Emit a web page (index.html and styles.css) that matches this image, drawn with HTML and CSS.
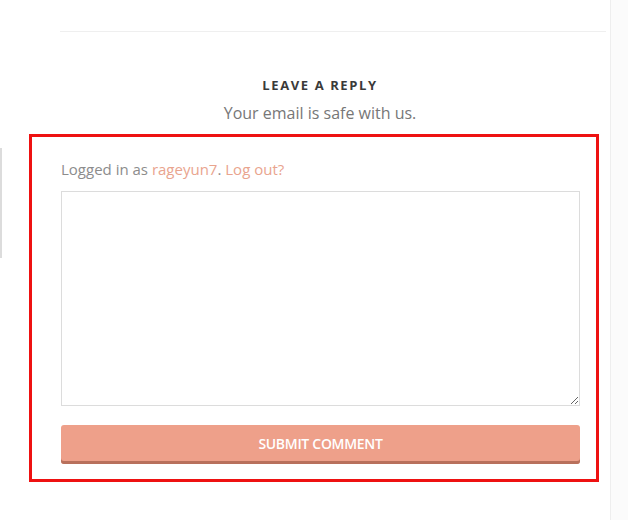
FILE: index.html
```html
<!DOCTYPE html>
<html>
<head>
<meta charset="utf-8">
<link rel="stylesheet" href="styles.css">
</head>
<body>
<div class="page">
  <div class="main">
    <div class="side-mark"></div>
    <div class="divider"></div>
    <div class="respond">
      <h3 class="reply-title">LEAVE A REPLY</h3>
      <p class="reply-note">Your email is safe with us.</p>
      <div class="highlight">
        <form class="comment-form">
          <p class="logged-in">Logged in as <a href="#">rageyun7</a>. <a href="#">Log out?</a></p>
          <textarea class="comment-box"></textarea>
          <button type="button" class="submit">SUBMIT COMMENT</button>
        </form>
      </div>
    </div>
  </div>
  <div class="sidebar"></div>
</div>
</body>
</html>
```
FILE: styles.css
```css
html, body {
  margin: 0;
  padding: 0;
  background: #fff;
}
.page {
  display: flex;
  width: 628px;
  height: 520px;
  overflow: hidden;
}
.main {
  position: relative;
  width: 610px;
  flex: none;
}
.sidebar {
  flex: 1;
  background: #fbfbfb;
  border-left: 1px solid #eeeeee;
}
.side-mark {
  position: absolute;
  left: 0;
  top: 148px;
  width: 2px;
  height: 110px;
  background: #dcdcdc;
}
.divider {
  margin: 31px 4px 0 60px;
  height: 1px;
  background: #efefef;
}
.respond {
  padding: 0 0 0 29px;
  width: 570px;
}
.reply-title {
  margin: 44px 0 0 0;
  padding-left: 12px;
  font-family: "Open Sans", sans-serif;
  font-weight: 700;
  font-size: 13px;
  letter-spacing: 1.6px;
  line-height: 18px;
  color: #3a3a3a;
  text-align: center;
}
.reply-note {
  margin: 9px 0 0 0;
  padding-left: 12px;
  font-family: "Open Sans", sans-serif;
  font-size: 16px;
  line-height: 20px;
  color: #777;
  text-align: center;
}
.highlight {
  margin-top: 11px;
  border: 3px solid #ee1111;
  padding: 22px 16px 15px 29px;
  box-sizing: border-box;
  height: 348px;
}
.comment-form {
  display: flex;
  flex-direction: column;
}
.logged-in {
  margin: 0;
  font-family: "Open Sans", sans-serif;
  font-size: 15px;
  line-height: 20px;
  color: #8c8c8c;
}
.logged-in a {
  color: #e9a48e;
  text-decoration: none;
}
.comment-box {
  margin-top: 12px;
  width: 519px;
  height: 215px;
  box-sizing: border-box;
  border: 1px solid #dcdcdc;
  border-radius: 0;
  padding: 6px;
  background: #fff;
  font-family: "Open Sans", sans-serif;
}
.submit {
  margin-top: 19px;
  width: 519px;
  height: 39px;
  border: none;
  border-radius: 3px;
  background: #eea08a;
  box-shadow: inset 0 -3px 0 #b8705c;
  padding: 0 0 3px 0;
  font-family: "Open Sans", sans-serif;
  font-weight: 600;
  font-size: 14px;
  letter-spacing: -0.3px;
  color: #fff;
}
```
